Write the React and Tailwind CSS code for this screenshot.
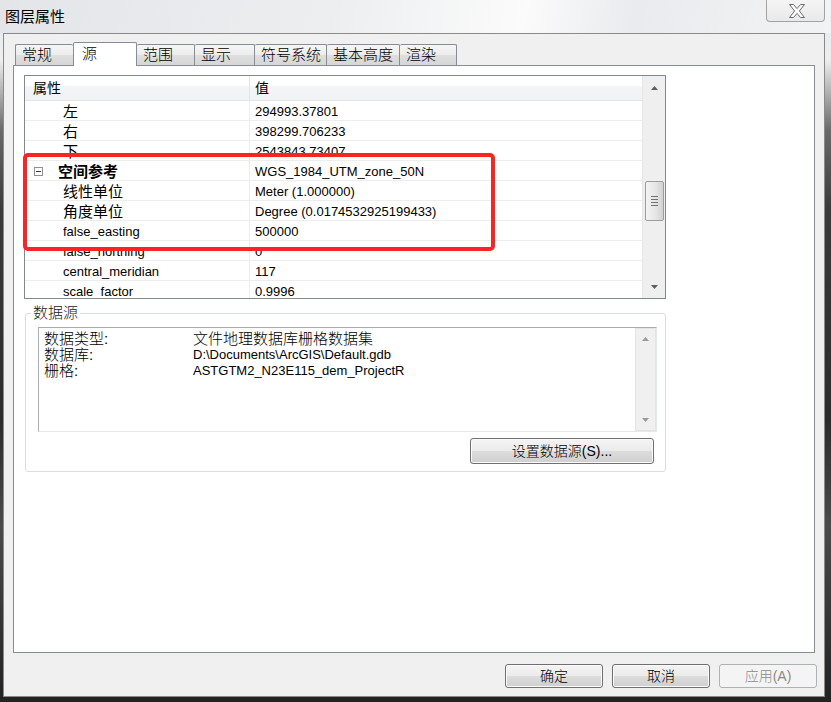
import React from "react";

const FONT = "font-['Liberation_Sans','Noto_Sans_CJK_SC',sans-serif]";

const rows = [
  { k: "左", v: "294993.37801", cjk: true },
  { k: "右", v: "398299.706233", cjk: true },
  { k: "下", v: "2543843.73407", cjk: true },
  { k: "空间参考", v: "WGS_1984_UTM_zone_50N", cjk: true, group: true },
  { k: "线性单位", v: "Meter (1.000000)", cjk: true },
  { k: "角度单位", v: "Degree (0.0174532925199433)", cjk: true },
  { k: "false_easting", v: "500000" },
  { k: "false_northing", v: "0" },
  { k: "central_meridian", v: "117" },
  { k: "scale_factor", v: "0.9996" },
];

const tabs = [
  { t: "常规", w: "w-[58px]" },
  { t: "源", w: "w-[64px]", sel: true },
  { t: "范围", w: "w-[58px]" },
  { t: "显示", w: "w-[60px]" },
  { t: "符号系统", w: "w-[72px]" },
  { t: "基本高度", w: "w-[73px]" },
  { t: "渲染", w: "w-[57px]" },
];

function Up({ c = "#5f5f5f" }) {
  return (
    <svg width="7" height="4" viewBox="0 0 7 4">
      <path d="M0 4L3.5 0L7 4Z" fill={c} />
    </svg>
  );
}
function Down({ c = "#5f5f5f" }) {
  return (
    <svg width="7" height="4" viewBox="0 0 7 4">
      <path d="M0 0L3.5 4L7 0Z" fill={c} />
    </svg>
  );
}

function Tab({ t, w, sel, first, nextSel }) {
  if (sel) {
    return (
      <div
        className={`${w} h-[24px] -mb-px relative z-10 bg-white border-l border-t border-r border-[#898c95] rounded-t-[2px] flex items-center pl-[8px] pb-[2px] text-[15px] leading-[18px] font-light text-black`}
      >
        {t}
      </div>
    );
  }
  return (
    <div
      className={`${w} h-[21px] border-t border-[#898c95] ${first ? "border-l" : ""} ${
        nextSel ? "" : "border-r"
      } rounded-t-[2px] bg-[linear-gradient(to_bottom,#f6f6f6_0%,#ececec_50%,#dfdfdf_50%,#d6d6d6_100%)] flex items-center pl-[6px] text-[15px] leading-[18px] font-light text-black`}
    >
      {t}
    </div>
  );
}

function WinButton({ children, className = "", disabled }) {
  return (
    <div
      className={`${className} rounded-[3px] border flex items-center justify-center ${
        disabled
          ? "border-[#adb2b5] bg-[#f4f4f4] text-[#8a8a8a]"
          : "border-[#707070] bg-[linear-gradient(to_bottom,#f4f4f4_0%,#ebebeb_50%,#dddddd_50%,#cfcfcf_100%)] shadow-[inset_0_0_0_1px_#fbfbfb] text-black"
      } text-[14px] leading-[18px] font-light`}
    >
      {children}
    </div>
  );
}

function PropertyGrid() {
  return (
    <div className="relative ml-[10px] mt-[9px] w-[642px] h-[224px] shrink-0 border border-[#828790] flex bg-white">
      <div className="flex-1 overflow-hidden flex flex-col">
        <div className="h-[25px] shrink-0 flex border-b border-[#e5e5e5] bg-[linear-gradient(to_bottom,#ffffff_0%,#ffffff_42%,#f4f5f7_42%,#f1f2f4_100%)]">
          <div className="w-[225px] shrink-0 border-r border-[#e5e5e5] pl-[8px] flex items-center text-[14px] leading-[18px] text-black">
            属性
          </div>
          <div className="flex-1 pl-[5px] flex items-center text-[14px] leading-[18px] text-black">值</div>
        </div>
        {rows.map((r) => (
          <div key={r.k} className="h-[20px] shrink-0 flex border-b border-[#ededed]">
            <div
              className={`w-[225px] shrink-0 border-r border-[#ededed] flex items-center pt-[1px] ${
                r.group ? "pl-[9px]" : "pl-[38px]"
              }`}
            >
              {r.group && (
                <span className="w-[9px] h-[9px] mr-[15px] border border-[#8f8f8f] bg-white flex items-center justify-center">
                  <span className="w-[5px] h-px bg-[#3a3a3a]" />
                </span>
              )}
              <span
                className={`${r.cjk ? "text-[15px]" : "text-[13px]"} ${
                  r.group ? "font-bold" : ""
                } leading-[19px] text-black whitespace-nowrap`}
              >
                {r.k}
              </span>
            </div>
            <div className="flex-1 pl-[5px] pt-[1px] flex items-center text-[13px] leading-[19px] text-black whitespace-nowrap">
              {r.v}
            </div>
          </div>
        ))}
      </div>
      <div className="w-[23px] shrink-0 bg-[#efefef] border-l border-[#e6e6e6] flex flex-col items-center">
        <div className="h-[23px] w-full flex items-center justify-center">
          <Up />
        </div>
        <div className="mt-[82px] w-[19px] h-[40px] rounded-[2px] border border-[#9c9c9c] bg-[linear-gradient(to_right,#f4f4f4_0%,#e6e6e6_55%,#d2d2d2_100%)] flex flex-col items-center justify-center gap-[2px]">
          <span className="w-[7px] h-px bg-[#707070]" />
          <span className="w-[7px] h-px bg-[#707070]" />
          <span className="w-[7px] h-px bg-[#707070]" />
          <span className="w-[7px] h-px bg-[#707070]" />
        </div>
        <div className="flex-1" />
        <div className="h-[23px] w-full flex items-center justify-center">
          <Down />
        </div>
      </div>
      <div className="absolute left-[-2px] top-[77px] w-[472px] h-[98px] border-[4px] border-[#fb2323] rounded-[5px] pointer-events-none" />
    </div>
  );
}

function DataSource() {
  const lines = [
    ["数据类型:", "文件地理数据库栅格数据集", true],
    ["数据库:", "D:\\Documents\\ArcGIS\\Default.gdb", false],
    ["栅格:", "ASTGTM2_N23E115_dem_ProjectR", false],
  ];
  return (
    <fieldset className="ml-[11px] mt-[6px] w-[641px] border border-[#d5dfe5] rounded-[3px] p-0">
      <legend className="ml-[5px] px-[2px] text-[15px] leading-[16px] font-light text-[#1a1a1a]">数据源</legend>
      <div className="pl-[12px] pr-[8px] pb-[7px]">
        <div className="mt-[6px] h-[105px] border border-t-[#abadb3] border-l-[#abadb3] border-b-[#e3e9ef] border-r-[#e3e9ef] bg-white flex">
          <div className="flex-1 pl-[5px] pt-[3px]">
            {lines.map(([a, b, cjk]) => (
              <div key={a} className="h-[16px] flex items-center whitespace-nowrap">
                <span className="w-[149px] shrink-0 text-[15px] leading-[16px] font-light text-black">{a}</span>
                <span className={`${cjk ? "text-[15px] font-light" : "text-[13px]"} leading-[16px] text-black`}>
                  {b}
                </span>
              </div>
            ))}
          </div>
          <div className="w-[21px] shrink-0 bg-[#f0f0f0] border border-[#e4e4e4] flex flex-col items-center justify-between py-[8px]">
            <Up c="#9a9a9a" />
            <Down c="#9a9a9a" />
          </div>
        </div>
        <div className="mt-[6px] flex justify-end pr-[3px]">
          <WinButton className="w-[184px] h-[26px]">设置数据源(S)...</WinButton>
        </div>
      </div>
    </fieldset>
  );
}

export default function App() {
  return (
    <div
      className={`w-[831px] h-[702px] overflow-hidden flex flex-col ${FONT} bg-[linear-gradient(to_bottom,#e8eaed_0px,#eeeeee_60px,#6a6a6a_130px,#3a3a3a_210px,#2b2b2b_60%,#4a4a4a_75%,#222222_100%)]`}
    >
      {/* Title bar */}
      <div className="h-[33px] shrink-0 flex justify-between bg-[linear-gradient(100deg,#e3e5e8_0%,#eceef0_40%,#fbfbfb_63%,#e9ebee_76%,#f2f3f4_100%)]">
        <div className="pl-[5px] pt-[8px] text-[15px] leading-[17px] text-black">图层属性</div>
        <div className="mr-[6px] w-[59px] h-[22px] border border-t-0 border-[#a3a3a3] rounded-b-[4px] bg-[linear-gradient(to_bottom,#f5f5f5,#e9e9e9)] flex items-center justify-center pl-[2px]">
          <svg width="16" height="14" viewBox="0 0 16 14">
            <path
              d="M0.5 0.5H4.5L8 4.6L11.5 0.5H15.5L10.4 7L15.5 13.5H11.5L8 9.4L4.5 13.5H0.5L5.6 7Z"
              fill="#fdfdfd"
              stroke="#6c6c6c"
              strokeWidth="1"
              strokeLinejoin="round"
            />
          </svg>
        </div>
      </div>

      {/* Client */}
      <div className="flex-1 flex pl-[3px] pr-[6px] pb-[5px]">
        <div className="flex-1 border border-[#8a8a8a] bg-[#f0f0f0] flex flex-col pt-[8px]">
          <div className="h-[23px] shrink-0 ml-[11px] flex items-end">
            {tabs.map((tb, i) => (
              <Tab key={tb.t} {...tb} first={i === 0} nextSel={tabs[i + 1]?.sel} />
            ))}
          </div>
          <div className="mx-[9px] h-[588px] shrink-0 border border-[#898c95] bg-white flex flex-col">
            <PropertyGrid />
            <DataSource />
          </div>
          <div className="mt-[11px] flex justify-end gap-[9px] pr-[7px]">
            <WinButton className="w-[98px] h-[24px]">确定</WinButton>
            <WinButton className="w-[98px] h-[24px]">取消</WinButton>
            <WinButton className="w-[98px] h-[24px]" disabled>
              应用(A)
            </WinButton>
          </div>
        </div>
      </div>
    </div>
  );
}
